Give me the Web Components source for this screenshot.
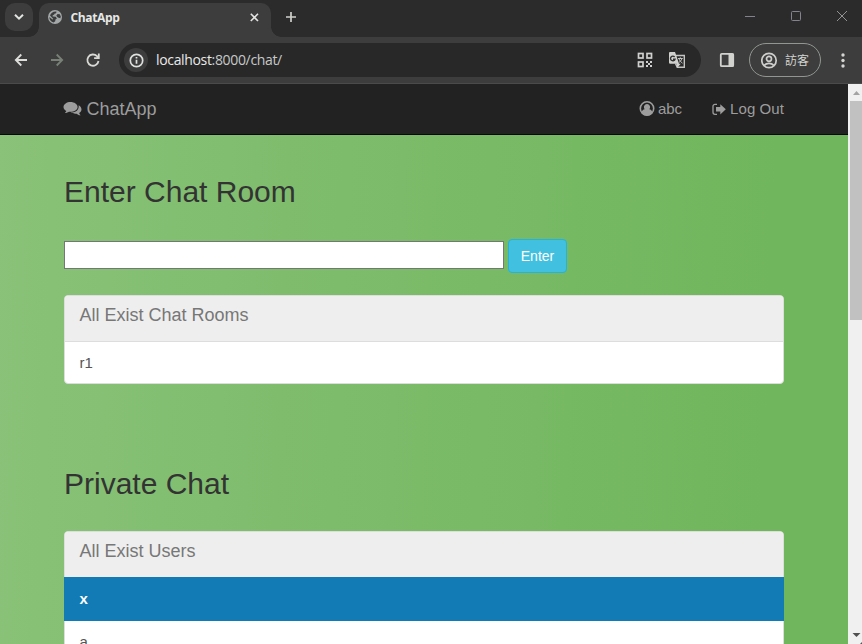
<!DOCTYPE html>
<html lang="en">
<head>
<meta charset="utf-8">
<title>ChatApp</title>
<style>
html,body{margin:0;height:100%;overflow:hidden}
body{font-family:"Liberation Sans",Arial,sans-serif;background:#3c3d3c}
</style>
</head>
<body>
<app-window>
  <tab-strip slot="tabs">ChatApp</tab-strip>
  <tool-bar slot="tools"></tool-bar>
  <nav-bar><span slot="brand">ChatApp</span><span slot="user">abc</span><span slot="out">Log Out</span></nav-bar>
  <chat-section style="height:292px">
    <span slot="title">Enter Chat Room</span>
    <room-form>Enter</room-form>
    <list-panel><span slot="head">All Exist Chat Rooms</span><list-row>r1</list-row></list-panel>
  </chat-section>
  <chat-section>
    <span slot="title">Private Chat</span>
    <list-panel><span slot="head">All Exist Users</span><list-row active>x</list-row><list-row>a</list-row></list-panel>
  </chat-section>
  <scroll-bar slot="scroll"></scroll-bar>
</app-window>
<script>
const define = (name, html) => customElements.define(name, class extends HTMLElement {
  constructor() {
    super();
    this.attachShadow({mode: 'open'}).innerHTML = '<style>:host,*{box-sizing:border-box}svg{display:block;flex:none}</style>' + html;
  }
});

define('app-window', `<style>
:host{display:flex;flex-direction:column;width:862px;height:644px;overflow:hidden}
.body{display:flex;flex:1;min-height:0}
main{width:848px;overflow:hidden;background:linear-gradient(92deg,#89c278 0%,#7dbc6b 40%,#70b65c 90%,#70b65c 100%)}
</style><slot name="tabs"></slot><slot name="tools"></slot>
<div class="body"><main><slot></slot></main><slot name="scroll"></slot></div>`);

define('tab-strip', `<style>
:host{display:flex;flex:none;height:37px;background:#2b2b2b;color:#e6e8e6;font:bold 12px/16px "Open Sans","Noto Sans",sans-serif;padding-left:5px}
.search{width:28px;height:28px;margin-top:3px;border-radius:10px;background:#3c3d3c;display:grid;place-items:center}
.tab{position:relative;margin:3px 0 0 6px;width:232px;height:34px;background:#3c3d3c;border-radius:10px 10px 0 0;display:flex;align-items:center;padding:0 12px 5px 9px}
.tab:before,.tab:after{content:"";position:absolute;bottom:0;width:10px;height:10px}
.tab:before{left:-10px;background:radial-gradient(circle at 0 0,transparent 9.5px,#3c3d3c 10px)}
.tab:after{right:-10px;background:radial-gradient(circle at 100% 0,transparent 9.5px,#3c3d3c 10px)}
.name{flex:1;margin-left:7.5px;letter-spacing:-.35px;padding-top:1px}
.plus{margin:11px 0 0 14px}
.win{margin:10px 14px 0 auto;display:flex;gap:34px}
</style>
<div class="search"><svg width="10" height="8" fill="none" stroke="#e2e4df" stroke-width="2"><path d="M1 1.7l4 4 4-4"/></svg></div>
<div class="tab"><svg width="15" height="15" viewBox="0 0 15 15"><circle cx="7" cy="7" r="7" fill="#a5a8a9"/><path d="M8.400 1.600C8.600 3.200 7.800 3.700 6.500 3.700C6.300 4.700 5.600 5 4.700 5.200L4.600 6.600L7.700 6.800L8.900 8.600L7.500 9.400L7.200 11.200L5.600 12.600C3 12 1.300 9.800 1.400 7.100L4.500 9.600L5.300 8.900L2 5.600C2.800 3.200 4.800 1.400 8.400 1.600ZM8.300 5.600L9.600 4.100L11.800 4.300L12.800 6.600L12.300 8.300L10.600 7.700L9.200 7Z" fill="#3b3d3d"/></svg>
<span class="name"><slot></slot></span><svg width="9" height="9" viewBox="0 0 9 9" stroke="#e4e4e2" stroke-width="1.6"><path d="M.8.8l7.200 7.200M8 .8L.8 8"/></svg></div>
<svg class="plus" width="12" height="12" stroke="#d0d0cb" stroke-width="1.7"><path d="M6 1v10M1 6h10"/></svg>
<div class="win"><svg width="12" height="12" stroke="#83838c"><path d="M1 6.500h10"/></svg><svg width="12" height="12" fill="none" stroke="#83838c"><rect x="1.500" y="1.500" width="9" height="9" rx="1"/></svg><svg width="12" height="12" stroke="#929292"><path d="M1 1l10 10M11 1L1 11"/></svg></div>`);

define('tool-bar', `<style>
:host{display:flex;flex:none;align-items:center;height:47px;background:#3c3d3c;border-bottom:1px solid #4a4b4a;padding-left:13px;color:#e8eae9;font:14px/18px "Open Sans","Noto Sans",sans-serif}
.r{margin-left:20px}
.url{margin-left:18px;width:582px;height:34px;border-radius:17px;background:#282828;display:flex;align-items:center;padding:0 15px 0 5px}
.info{width:24px;height:24px;border-radius:12px;background:#3c3d3c;display:grid;place-items:center;margin-right:8px}
.addr{flex:1;white-space:nowrap;letter-spacing:-.34px}
.path{color:#c7c9c8}
.guest{margin-left:14px;width:72px;height:34px;border:1px solid #929692;border-radius:17px;display:flex;align-items:center;padding-left:11px;gap:7px;font:12px/18px "Noto Sans CJK TC",sans-serif;color:#d4d4d2}
</style>
<svg width="16" height="14" viewBox="0 0 16 14" fill="none" stroke="#dedfdb" stroke-width="1.8"><path d="M14 7H3M8.300 1.500L2.800 7l5.500 5.500"/></svg>
<svg class="r" width="16" height="14" viewBox="0 0 16 14" fill="none" stroke="#788078" stroke-width="1.8"><path d="M2 7h11M7.700 1.500L13.200 7l-5.500 5.500"/></svg>
<svg class="r" style="margin-left:19px" width="17" height="16" viewBox="0 0 17 16" fill="none" stroke="#d9d9d6" stroke-width="1.8"><path d="M14.500 9A5.600 5.600 0 1 1 13 4.200L14.500 5.600M14.800 1.500v4.700h-4.700"/></svg>
<div class="url"><div class="info"><svg width="15" height="15" fill="none" stroke="#dfe1df" stroke-width="1.7"><circle cx="7.500" cy="7.500" r="6.200"/><path d="M7.500 6.700v4M7.500 4v1.600"/></svg></div>
<span class="addr">localhost<span class="path">:8000/chat/</span></span>
<svg width="16" height="16" viewBox="0 0 16 16"><g fill="none" stroke="#d0d0ce" stroke-width="1.700"><rect x="1.500" y="1.500" width="4.500" height="4.500"/><rect x="10" y="1.500" width="4.500" height="4.500"/><rect x="1.500" y="10" width="4.500" height="4.500"/></g><path fill="#d0d0ce" d="M9 9h2v2H9zM13 9h2v2h-2zM11 11h2v2h-2zM9 13h2v2H9zM13 13h2v2h-2z"/></svg>
<svg style="margin-left:15px" width="18" height="18" viewBox="0 0 18 18"><path fill="none" stroke="#c3c3c1" stroke-width="1.400" d="M8 4.500h8.300v11.800H9.200L7.500 12.500"/><path fill="#d0d0ce" d="M2 1h5l1 2.700L11 12.700H2.200A1.200 1.200 0 0 1 1 11.500V2a1 1 0 0 1 1-1zM8.500 12.700h4.300l-3.500 4z"/><path fill="none" stroke="#303030" stroke-width="1.400" d="M6.600 6A2.300 2.300 0 1 0 7 8.200H5"/><path fill="none" stroke="#c3c3c1" stroke-width="1" d="M10 7.500h4.800M12.300 6.300v1.200M13.800 7.700c-.5 1.800-1.700 3-3 3.900M11 8c.8 1.800 2 3.200 3.500 4.200"/></svg></div>
<svg style="margin-left:18px" width="16" height="16" viewBox="0 0 16 16"><rect x="1.800" y="1.800" width="12.400" height="12.400" rx="1" fill="none" stroke="#d2d2cf" stroke-width="1.800"/><path fill="#d2d2cf" d="M9.500 1.500h5v13h-5z"/></svg>
<div class="guest"><svg width="17" height="17" viewBox="0 0 17 17" fill="none" stroke="#cecfcd" stroke-width="1.700"><circle cx="8" cy="8.500" r="7.200"/><circle cx="8" cy="6.800" r="2.500"/><path d="M3.200 13.400c2.500-2.800 7.100-2.800 9.600 0"/></svg><span>訪客</span></div>
<svg style="margin-left:20px" width="4" height="15" fill="#d5d5d2"><circle cx="2" cy="2" r="1.700"/><circle cx="2" cy="7.500" r="1.700"/><circle cx="2" cy="13" r="1.700"/></svg>`);

define('nav-bar', `<style>
:host{display:flex;height:51px;background:#222;border-bottom:1px solid #080808;color:#9d9d9d;padding:0 64px 0 63px;align-items:center;font-size:15px}
.brand{font-size:18px;margin-left:4.500px;flex:1}
.link{padding-bottom:2px}
</style>
<svg width="19" height="17" viewBox="0 0 19 17" fill="#9d9d9d"><path d="M7.500 1C3.800 1 .5 3.100.5 6c0 1.800 1.200 3.200 2.800 4-.2.8-.8 1.500-1.400 2 1.700 0 3-.7 4-1.300l1.600.1C11.300 10.800 14.600 8.800 14.600 6S11.300 1 7.500 1zM15.600 4.200c1.800.8 2.900 2.500 2.900 4.300 0 1.300-.9 2.600-2.300 3.400.2.900.6 1.700 1.500 2.300-1.800.2-3-.6-4.100-1.500-1.900.2-4.400-.1-5.800-1.100 5-.1 8.600-2.800 7.800-7.400z"/></svg>
<span class="brand"><slot name="brand"></slot></span>
<svg width="16" height="16" viewBox="0 0 16 16"><circle cx="8" cy="7.500" r="6.700" fill="none" stroke="#9d9d9d" stroke-width="1.600"/><path fill="#9d9d9d" d="M8 3a3 3.200 0 0 0-2.300 5.300C4.200 8.500 3 9.500 2.300 11.900A7.200 7.200 0 0 0 13.700 11.900C13 9.500 11.800 8.500 10.300 8.300A3 3.200 0 0 0 8 3z"/></svg>
<span class="link" style="margin-left:3px"><slot name="user"></slot></span>
<svg style="margin-left:30px" width="14" height="13" viewBox="0 0 14 13"><path fill="none" stroke="#9d9d9d" stroke-width="1.300" d="M5 1.300H3A2 2 0 0 0 1 3.300v6A2 2 0 0 0 3 11.300h2"/><path fill="#9d9d9d" d="M4 4.100h4.300V1.200L13.800 6.300 8.300 11.400V8.500H4z"/></svg>
<span class="link" style="margin-left:4px;letter-spacing:.08px"><slot name="out"></slot></span>`);

define('chat-section', `<style>
:host{display:block;padding:40px 64px 0}
h2{margin:0 0 31px;font-weight:400;font-size:30px;line-height:33px;color:#333}
</style><h2><slot name="title"></slot></h2><slot></slot>`);

define('room-form', `<style>
:host{display:flex;align-items:flex-start;gap:4px;height:34px;margin-bottom:22px}
input{display:block;width:440px;height:28px;margin:2px 0 0;padding:1px 2px;border:1px solid #767676;border-radius:0;background:#fff}
button{width:59px;height:34px;border:1px solid #28b2d5;border-radius:4px;background:#42c0df;color:#fff;font:14px/20px "Liberation Sans",Arial,sans-serif;padding:0}
</style><input><button><slot></slot></button>`);

define('list-panel', `<style>
:host{display:block;width:720px;border:1px solid #ddd;border-radius:4px;background:#fff;overflow:clip;overflow-clip-margin:1px}
header{height:46px;background:#eee;border-bottom:1px solid #ddd;border-radius:3px 3px 0 0;padding:9px 14.500px 0;color:#777;font-size:18px;line-height:21px}
</style><header><slot name="head"></slot></header><slot></slot>`);

define('list-row', `<style>
:host{display:block;height:41px;padding:10px 14.500px;color:#555;font-size:15px;line-height:22px}
:host([active]){height:44px;margin:-1px -1px 0;padding:11px 15.500px;background:#127bb5;color:#fff;font-weight:700;position:relative}
</style><slot></slot>`);

define('scroll-bar', `<style>
:host{display:flex;flex-direction:column;width:14px;background:#f0f0f0;align-items:flex-end;overflow:hidden}
.thumb{width:12px;height:219px;background:#c1c1c1}
.end{height:17px;width:14px}
.low{margin-top:auto}
</style><svg class="end" viewBox="0 0 14 17"><path d="M5 11l3.500-4 3.500 4z" fill="#a3a3a3"/></svg><div class="thumb"></div><svg class="end low" viewBox="0 0 14 17"><path d="M4.500 6h8L8.500 10z" fill="#505050"/><path d="M14 15l-2 2h2z" fill="#555"/></svg>`);
</script>
</body>
</html>
